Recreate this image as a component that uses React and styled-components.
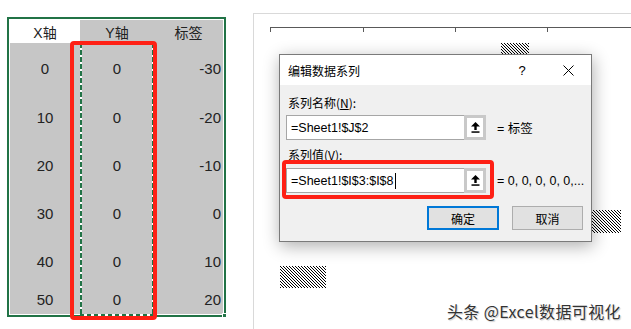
import React, { useId } from "react";
import styled, { createGlobalStyle } from "styled-components";

const Global = createGlobalStyle`
  html, body { margin: 0; padding: 0; background: #fff; }
  * { box-sizing: border-box; }
`;

const Page = styled.div`
  position: relative;
  width: 631px;
  height: 329px;
  overflow: hidden;
  display: flex;
  align-items: flex-start;
  font-family: "Liberation Sans", "Noto Sans CJK SC", sans-serif;
`;

/* ---------- spreadsheet ---------- */
const Sheet = styled.div`
  margin: 17px 0 0 7px;
  border: 2px solid #217346;
  padding: 1px;
  background: #fff;
  display: flex;
  color: #222;
  font-size: 15px;
`;

const Column = styled.div`
  display: flex;
  flex-direction: column;
  width: ${(p) => p.$w}px;
`;

const HeadCell = styled.div`
  height: 23px;
  display: flex;
  align-items: center;
  justify-content: center;
  background: ${(p) => (p.$light ? "#fff" : "#c6c6c6")};
  font-size: 14px;
  font-family: "Liberation Sans", "Noto Sans CJK SC", sans-serif;
`;

const Cell = styled.div`
  height: ${(p) => p.$h}px;
  display: flex;
  align-items: center;
  justify-content: ${(p) => (p.$right ? "flex-end" : "center")};
  padding-right: ${(p) => (p.$right ? 2 : 0)}px;
  background: #c6c6c6;
`;

const SelBody = styled.div`
  position: relative;
  display: flex;
  flex-direction: column;
`;

const Marquee = styled.div`
  position: absolute;
  inset: 0 0 -2px 0;
  pointer-events: none;
  background:
    repeating-linear-gradient(90deg, #217346 0 4px, #fff 4px 7px) top left / 100% 2px no-repeat,
    repeating-linear-gradient(90deg, #217346 0 4px, #fff 4px 7px) bottom left / 100% 2px no-repeat,
    repeating-linear-gradient(180deg, #217346 0 5px, #fff 5px 7px) top left / 2px 100% no-repeat,
    repeating-linear-gradient(180deg, #217346 0 5px, #fff 5px 7px) top right / 2px 100% no-repeat;
`;

const Handle = styled.div`
  position: absolute;
  left: 222px;
  top: 313px;
  width: 5px;
  height: 5px;
  background: #217346;
  border: 1px solid #fff;
`;

const RedBox = styled.div`
  position: absolute;
  left: ${(p) => p.$x}px;
  top: ${(p) => p.$y}px;
  width: ${(p) => p.$w}px;
  height: ${(p) => p.$h}px;
  border: 4px solid #fe2015;
  border-radius: 4px;
  pointer-events: none;
`;

/* ---------- chart ---------- */
const ChartPanel = styled.div`
  position: relative;
  margin: 13px 0 0 27px;
  flex: 1;
  height: 316px;
  border-top: 1px solid #d9d9d9;
  border-left: 1px solid #d9d9d9;
`;

const Axis = styled.div`
  margin: 13px 0 0 16px;
  border-top: 1px solid #595959;
  display: flex;
`;

const Tick = styled.div`
  flex: none;
  width: ${(p) => p.$w}px;
  height: 4px;
  border-left: 1px solid #595959;
`;

const HatchBox = styled.svg`
  position: absolute;
  left: ${(p) => p.$x}px;
  top: ${(p) => p.$y}px;
  display: block;
`;

function Hatch({ x, y, w, h }) {
  const id = useId().replace(/:/g, "");
  return (
    <HatchBox $x={x} $y={y} width={w} height={h} shapeRendering="crispEdges">
      <defs>
        <pattern id={id} width="3" height="3" patternUnits="userSpaceOnUse">
          <rect width="3" height="3" fill="#fff" />
          <rect x="0" y="0" width="1" height="1" fill="#000" />
          <rect x="1" y="1" width="1" height="1" fill="#000" />
          <rect x="2" y="2" width="1" height="1" fill="#000" />
        </pattern>
      </defs>
      <rect width={w} height={h} fill={`url(#${id})`} />
    </HatchBox>
  );
}

/* ---------- dialog ---------- */
const Dialog = styled.div`
  position: absolute;
  left: 279px;
  top: 54px;
  width: 313px;
  border: 1px solid #7a7a7a;
  background: #f0f0f0;
  box-shadow: 1px 4px 16px rgba(0, 0, 0, 0.32);
  font-family: "Noto Sans CJK SC", "Liberation Sans", sans-serif;
  font-size: 12px;
  color: #000;
`;

const TitleBar = styled.div`
  height: 30px;
  background: #fff;
  display: flex;
  align-items: center;
  padding-left: 8px;
`;

const Title = styled.div`
  flex: 1;
`;

const TitleBtn = styled.div`
  width: 46px;
  height: 30px;
  display: flex;
  align-items: center;
  justify-content: center;
  font-family: "Liberation Sans", sans-serif;
  font-size: 13px;
`;

const Body = styled.div`
  padding: 10px 0 11px 6px;
  display: flex;
  flex-direction: column;
`;

const Label = styled.div`
  height: 16px;
  line-height: 16px;
  padding-left: 2px;
  margin-top: ${(p) => p.$mt || 0}px;
`;

const FieldRow = styled.div`
  display: flex;
  align-items: center;
  margin-top: ${(p) => p.$mt}px;
`;

const Input = styled.div`
  width: 178px;
  height: 25px;
  background: #fff;
  border: 1px solid #a6a6a6;
  border-right: none;
  display: flex;
  align-items: center;
  padding-left: 4px;
  font-family: "Liberation Sans", sans-serif;
  font-size: 12.5px;
`;

const Caret = styled.span`
  display: inline-block;
  width: 1px;
  height: 16px;
  background: #000;
  margin-left: 1px;
`;

const UpBtn = styled.div`
  width: 22px;
  height: 25px;
  border: 3px solid #c9c9c9;
  background: #fff;
  display: flex;
  align-items: center;
  justify-content: center;
`;

const RefValue = styled.div`
  margin-left: 11px;
  font-family: "Liberation Sans", "Noto Sans CJK SC", sans-serif;
  font-size: 12.5px;
  white-space: nowrap;
`;

const Buttons = styled.div`
  display: flex;
  justify-content: flex-end;
  gap: 13px;
  padding-right: 8px;
  margin-top: 13px;
`;

const Btn = styled.div`
  height: 24px;
  width: ${(p) => p.$w}px;
  background: #e1e1e1;
  border: ${(p) => (p.$primary ? "2px solid #0078d7" : "1px solid #adadad")};
  display: flex;
  align-items: center;
  justify-content: center;
`;

const Watermark = styled.div`
  position: absolute;
  right: 10px;
  bottom: 8px;
  font-family: "Noto Sans CJK SC", "Liberation Sans", sans-serif;
  font-size: 16px;
  line-height: 20px;
  letter-spacing: 0.4px;
  color: #333;
  text-shadow: 0 0 2px #fff, 1px 1px 1px rgba(0, 0, 0, 0.25);
`;

const UpArrow = () => (
  <svg width="9" height="11" viewBox="0 0 9 11">
    <polygon points="4.5,0 0,4.5 9,4.5" fill="#000" />
    <rect x="3.3" y="4" width="2.4" height="4" fill="#000" />
    <rect x="0.5" y="9.3" width="8" height="1.5" fill="#000" />
  </svg>
);

const CloseIcon = () => (
  <svg width="11" height="11" viewBox="0 0 11 11">
    <path d="M0.5 0.5 L10.5 10.5 M10.5 0.5 L0.5 10.5" stroke="#000" strokeWidth="1" fill="none" />
  </svg>
);

const rows = [
  { x: "0", y: "0", l: "-30", h: 50 },
  { x: "10", y: "0", l: "-20", h: 48 },
  { x: "20", y: "0", l: "-10", h: 48 },
  { x: "30", y: "0", l: "0", h: 48 },
  { x: "40", y: "0", l: "10", h: 48 },
  { x: "50", y: "0", l: "20", h: 29 },
];

export default function App() {
  return (
    <>
      <Global />
      <Page>
        <Sheet>
          <Column $w={70}>
            <HeadCell $light>X轴</HeadCell>
            {rows.map((r, i) => (
              <Cell key={i} $h={r.h}>{r.x}</Cell>
            ))}
          </Column>
          <Column $w={74}>
            <HeadCell>Y轴</HeadCell>
            <SelBody>
              {rows.map((r, i) => (
                <Cell key={i} $h={r.h}>{r.y}</Cell>
              ))}
              <Marquee />
            </SelBody>
          </Column>
          <Column $w={69}>
            <HeadCell>标签</HeadCell>
            {rows.map((r, i) => (
              <Cell key={i} $h={r.h} $right>{r.l}</Cell>
            ))}
          </Column>
        </Sheet>
        <Handle />
        <RedBox $x={70} $y={41} $w={87} $h={279} />

        <ChartPanel>
          <Axis>
            <Tick $w={93} />
            <Tick $w={92} />
            <Tick $w={92} />
            <Tick $w={92} />
          </Axis>
          <Hatch x={247} y={29} w={28} h={20} />
          <Hatch x={321} y={196} w={46} h={23} />
          <Hatch x={26} y={252} w={46} h={22} />
        </ChartPanel>

        <Dialog>
          <TitleBar>
            <Title>编辑数据系列</Title>
            <TitleBtn>?</TitleBtn>
            <TitleBtn><CloseIcon /></TitleBtn>
          </TitleBar>
          <Body>
            <Label>系列名称(<u>N</u>):</Label>
            <FieldRow $mt={4}>
              <Input>=Sheet1!$J$2</Input>
              <UpBtn><UpArrow /></UpBtn>
              <RefValue>= 标签</RefValue>
            </FieldRow>
            <Label $mt={7}>系列值(<u>V</u>):</Label>
            <FieldRow $mt={5}>
              <Input>=Sheet1!$I$3:$I$8<Caret /></Input>
              <UpBtn><UpArrow /></UpBtn>
              <RefValue>= 0, 0, 0, 0, 0,...</RefValue>
            </FieldRow>
            <Buttons>
              <Btn $w={72} $primary>确定</Btn>
              <Btn $w={71}>取消</Btn>
            </Buttons>
          </Body>
        </Dialog>
        <RedBox $x={282} $y={160} $w={212} $h={39} />

        <Watermark>头条 @Excel数据可视化</Watermark>
      </Page>
    </>
  );
}
